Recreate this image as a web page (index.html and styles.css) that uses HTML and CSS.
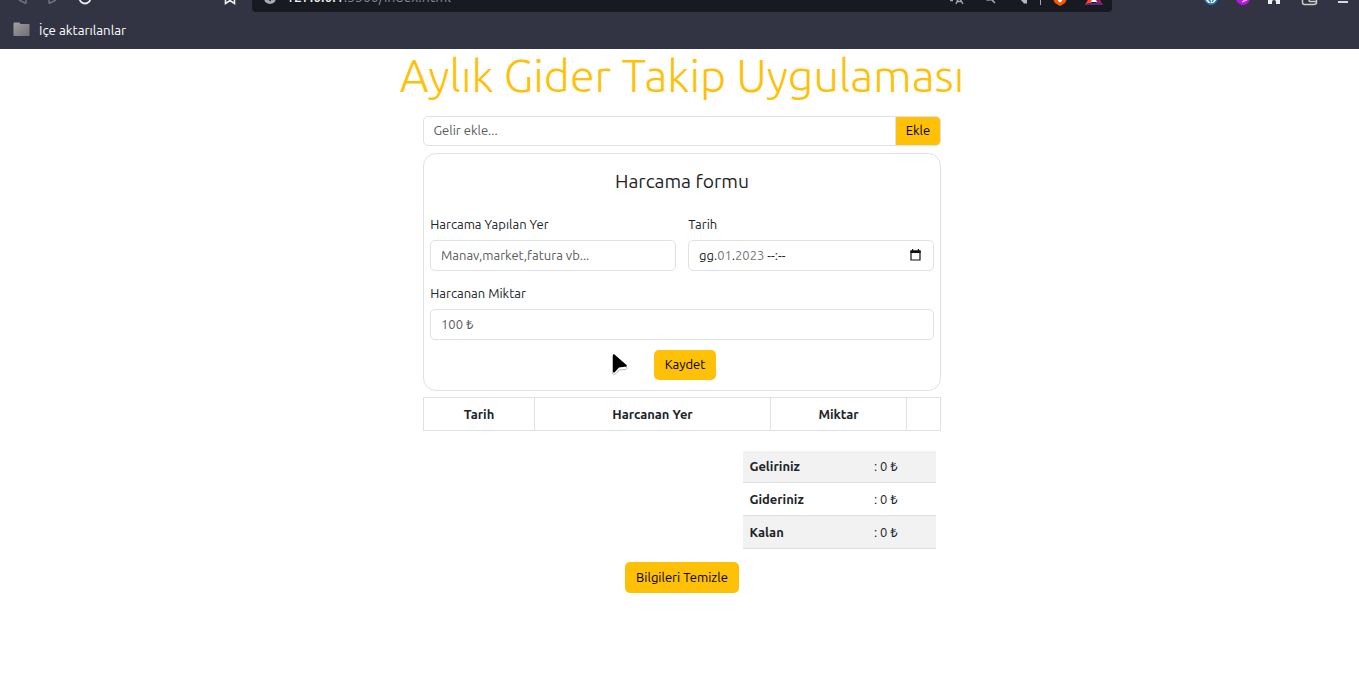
FILE: index.html
```html
<!DOCTYPE html>
<html lang="tr">
<head>
<meta charset="utf-8">
<title>Aylık Gider Takip Uygulaması</title>
<link rel="stylesheet" href="styles.css">
</head>
<body>
<header class="browser">
  <div class="toolbar">
    <svg class="nav-icons" width="252" height="12" viewBox="0 0 252 12" fill="none">
      <path d="M26 3.5 19 0M26 3.5V0" stroke="#70727d" stroke-width="1.5"/>
      <path d="M49 3.5 56 0M49 3.5V0" stroke="#70727d" stroke-width="1.5"/>
      <path d="M79.5-2a5.5 5.5 0 0 0 11 0" stroke="#eee" stroke-width="1.8"/>
      <path d="M225.500-2v5.500l4.500-3 4.500 3V-2" stroke="#eee" stroke-width="1.6"/>
    </svg>
    <div class="address">
      <svg class="info" width="14" height="12" viewBox="0 0 14 12"><circle cx="7" cy="-2" r="6" fill="#a5a7ac"/><path d="M7-4v5" stroke="#181a21" stroke-width="1.6"/></svg>
      <span class="url"><b>127.0.0.1</b>:5500/index.html</span>
      <svg class="address-icons" width="162" height="12" viewBox="0 0 162 12" fill="none">
        <path d="M0 .5h3M6 4l3-7 4 7M7 1.500h5" stroke="#a5a7ac" stroke-width="1.4"/>
        <path d="M35-2a4 4 0 0 0 6 1l4 4" stroke="#a5a7ac" stroke-width="1.6"/>
        <path d="M70-1l4 4.500h3V-1z" fill="#b5b7bc"/>
        <path d="M90.500 0v5" stroke="#a5a7ac"/>
        <path d="M103-1h14l-2 4-5 3-5-3z" fill="#ff5500"/><path d="M108-1h4v2l-2 1.500-2-1.500z" fill="#fff"/>
        <path d="M135 5l4-7h5l-4 7z" fill="#ff4724"/><path d="M153 5l-4-7h-5l3 7z" fill="#9e1f63"/><path d="M135 5l3-2h12l3 2z" fill="#4c2d80"/><path d="M141 2l1.500-3h3l1.500 3z" fill="#fff"/>
      </svg>
    </div>
    <svg class="ext-icons" width="247" height="12" viewBox="0 0 247 12" fill="none">
      <circle cx="99" cy="-2" r="7" fill="#2274b5"/><circle cx="99" cy="-2" r="5.300" fill="#fff"/><path d="M96-1l3 3.500M102-1l-2 3" stroke="#2274b5" stroke-width="1.200"/><path d="M98 0l2-1" stroke="#d33" stroke-width="1.5"/>
      <circle cx="131" cy="-2" r="7" fill="#b516db"/><path d="M130 2l5-2M131 0l3-1" stroke="#f2c5ff" stroke-width="1.2"/>
      <path d="M156-1h12v5h-4V2a2 2 0 0 0-4 0v2h-4z" fill="#eee"/>
      <path d="M190.500-2v4.500q0 2 2 2h9q3 0 3-2V-1M197-1.500v2q0 1 1 1h6" stroke="#ccc" stroke-width="1.5"/>
      <path d="M226 2h10" stroke="#d8d8dc" stroke-width="2"/>
    </svg>
  </div>
  <div class="bookmarks">
    <svg width="18" height="16" viewBox="0 0 18 16"><defs><linearGradient id="folder" x2="1" y2="1"><stop stop-color="#a2a2a2"/><stop offset=".55" stop-color="#858588"/><stop offset="1" stop-color="#707074"/></linearGradient></defs><path d="M.5 1.500q0-1 1-1h5l1 1.500h9v12H.5z" fill="url(#folder)"/></svg>
    <span>İçe aktarılanlar</span>
  </div>
</header>

<main class="page">
  <h1 class="title"><span>Aylık Gider Takip Uygulaması</span></h1>

  <div class="income">
    <div class="income-field">Gelir ekle...</div>
    <button class="income-btn">Ekle</button>
  </div>

  <form class="card">
    <h2 class="card-title"><span>Harcama formu</span></h2>
    <div class="fields">
      <div class="group">
        <label>Harcama Yapılan Yer</label>
        <div class="field">Manav,market,fatura vb...</div>
      </div>
      <div class="group">
        <label>Tarih</label>
        <div class="field date"><span>gg.<i>01</i>.<i>2023</i> --:--</span>
          <svg width="11" height="12" viewBox="0 0 11 12"><path d="M1 2h9v9H1z" fill="none" stroke="#111" stroke-width="1.200"/><path d="M.4 1.400h10.200V4H.4zM2 0h1.200v2H2zM7.800 0H9v2H7.800z" fill="#111"/></svg>
        </div>
      </div>
      <div class="group wide">
        <label>Harcanan Miktar</label>
        <div class="field">100 ₺</div>
      </div>
    </div>
    <div class="save-row"><button class="btn save" type="button">Kaydet</button></div>
    <svg class="cursor" width="20" height="24" viewBox="0 0 20 24"><path d="M2.500 2.500v18q1.500 2 3.500 0l3-3.500 7-.5q2-1 .5-2.500z" fill="#fff" stroke="#bbb" stroke-width="1"/><path d="M3 1.500v17.500q1 1 2 0l4-4.500 7.500-1q1-.5 0-1.500L4.500 1.500Q3.500.8 3 1.500z" fill="#000"/></svg>
  </form>

  <table class="expenses">
    <tr><th class="c-date">Tarih</th><th class="c-place">Harcanan Yer</th><th class="c-amount">Miktar</th><th></th></tr>
  </table>

  <table class="summary">
    <tr><th>Geliriniz</th><td>: 0 ₺</td></tr>
    <tr><th>Gideriniz</th><td>: 0 ₺</td></tr>
    <tr><th>Kalan</th><td>: 0 ₺</td></tr>
  </table>

  <div class="clear-row"><button class="btn clear">Bilgileri Temizle</button></div>
</main>
</body>
</html>
```
FILE: styles.css
```css
* { box-sizing: border-box; }
body {
  margin: 0;
  height: 682px;
  overflow: hidden;
  background: #fff;
  color: #212529;
  font: 13px/19px Ubuntu, "Noto Sans", sans-serif;
}
span, label { white-space: nowrap; }

.browser { height: 49px; background: #323443; overflow: hidden; }
.toolbar { display: flex; height: 12px; }
.address {
  display: flex;
  width: 860px;
  height: 12px;
  padding-left: 11px;
  background: #181a21;
  border-radius: 0 0 4px 4px;
  overflow: hidden;
}
.url { margin: -13px 0 0 9px; height: 20px; color: #85878f; font-size: 14px; line-height: 20px; }
.url b { color: #f4f4f5; font-weight: 500; }
.address-icons { margin-left: auto; }
.bookmarks { display: flex; align-items: center; gap: 8px; height: 37px; padding-left: 13px; color: #fff; font-size: 13.3px; }
.bookmarks svg { margin-top: -2px; }

.page { width: 518px; margin-left: 423px; }
.title {
  display: flex;
  justify-content: center;
  height: 67px;
  margin: 0;
  color: #ffc107;
  font: 300 45px/54px Ubuntu, "Noto Sans", sans-serif;
}

.income { display: flex; height: 30px; border: 1px solid #dee2e6; border-radius: 5px; overflow: hidden; }
.income-field { flex: 1; padding: 4px 9.500px; color: #595c5f; }
.income-btn { width: 45px; padding: 0 0 1px; border: 0; border-left: 1px solid #dee2e6; background: #ffc107; color: #000; font: inherit; }

.card { position: relative; height: 238px; margin-top: 7px; padding: 0 6px; border: 1px solid #dee2e6; border-radius: 13px; }
.card-title { display: flex; justify-content: center; margin: 0; padding-top: 15px; height: 61px; font-size: 19.3px; font-weight: 400; line-height: 25px; }
.fields { display: grid; grid-template-columns: 246px 246px; gap: 13px 12px; }
.group { display: flex; flex-direction: column; align-items: flex-start; height: 56px; }
.wide { grid-column: 1 / 3; }
.group label { height: 25px; padding-left: .3px; }
.field { width: 100%; height: 31px; padding: 5px 10px; border: 1px solid #dee2e6; border-radius: 5px; color: #595c5f; }
.date { display: flex; justify-content: space-between; color: #212529; }
.date svg { margin: 3px 2px 0 0; }
.date i { color: #757575; font-style: normal; }
.save-row { display: flex; justify-content: center; padding: 10px 0 0 6px; }
.btn { height: 30px; padding: 0; border: 0; border-radius: 5px; background: #ffc107; color: #000; font: inherit; }
.save { width: 62px; padding-bottom: 1px; }
.cursor { position: absolute; left: 186px; top: 199px; }

.expenses { width: 518px; height: 34px; margin-top: 6px; border-collapse: collapse; table-layout: fixed; }
.expenses th { height: 33px; padding: 1px 0 0; border: 1px solid #dee2e6; font-weight: 700; }
.c-date { width: 111px; }
.c-place { width: 236px; }
.c-amount { width: 136px; }

.summary { width: 193px; margin: 20px 5px 0 auto; border-spacing: 0; table-layout: fixed; }
.summary th, .summary td { height: 33px; padding: 0 6.4px; border-bottom: 1px solid #dee2e6; text-align: left; }
.summary th { width: 124.500px; }
.summary tr:first-child > * { height: 32px; }
.summary tr:nth-child(odd) { background: #f2f2f2; }

.clear-row { display: flex; justify-content: center; margin-top: 13px; }
.clear { width: 114px; height: 31px; }
```
